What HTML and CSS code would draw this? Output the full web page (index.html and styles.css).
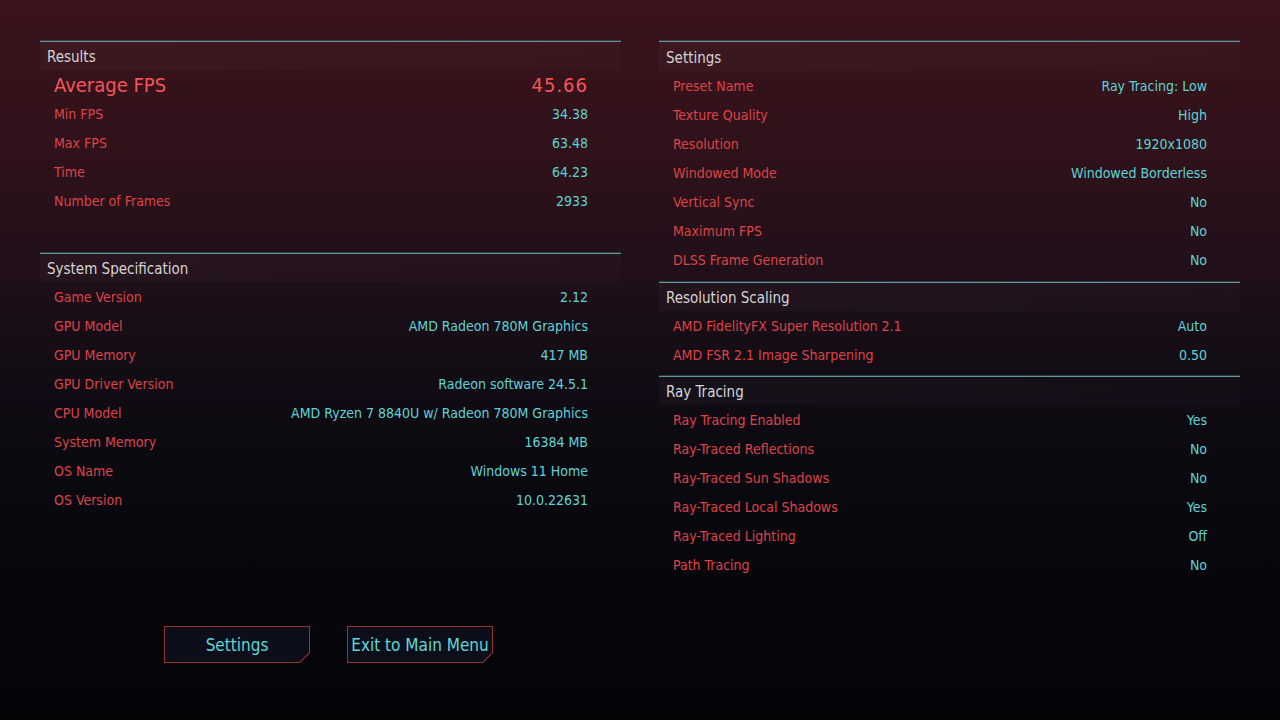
FILE: index.html
```html
<!DOCTYPE html>
<html lang="en">
<head>
<meta charset="utf-8">
<title>Benchmark Results</title>
<link rel="stylesheet" href="styles.css">
</head>
<body>
<main class="screen">
  <div class="column">
    <section class="panel">
      <h2 class="panel-title">Results</h2>
      <div class="row row-main"><span class="label">Average FPS</span><span class="value">45.66</span></div>
      <div class="row"><span class="label">Min FPS</span><span class="value">34.38</span></div>
      <div class="row"><span class="label">Max FPS</span><span class="value">63.48</span></div>
      <div class="row"><span class="label">Time</span><span class="value">64.23</span></div>
      <div class="row"><span class="label">Number of Frames</span><span class="value">2933</span></div>
    </section>
    <section class="panel panel-spaced">
      <h2 class="panel-title">System Specification</h2>
      <div class="row"><span class="label">Game Version</span><span class="value">2.12</span></div>
      <div class="row"><span class="label">GPU Model</span><span class="value">AMD Radeon 780M Graphics</span></div>
      <div class="row"><span class="label">GPU Memory</span><span class="value">417 MB</span></div>
      <div class="row"><span class="label">GPU Driver Version</span><span class="value">Radeon software 24.5.1</span></div>
      <div class="row"><span class="label">CPU Model</span><span class="value">AMD Ryzen 7 8840U w/ Radeon 780M Graphics</span></div>
      <div class="row"><span class="label">System Memory</span><span class="value">16384 MB</span></div>
      <div class="row"><span class="label">OS Name</span><span class="value">Windows 11 Home</span></div>
      <div class="row"><span class="label">OS Version</span><span class="value">10.0.22631</span></div>
    </section>
    <div class="actions">
      <button class="btn"><span class="btn-inner">Settings</span></button>
      <button class="btn"><span class="btn-inner">Exit to Main Menu</span></button>
    </div>
  </div>
  <div class="column">
    <section class="panel panel-first">
      <h2 class="panel-title">Settings</h2>
      <div class="row"><span class="label">Preset Name</span><span class="value">Ray Tracing: Low</span></div>
      <div class="row"><span class="label">Texture Quality</span><span class="value">High</span></div>
      <div class="row"><span class="label">Resolution</span><span class="value">1920x1080</span></div>
      <div class="row"><span class="label">Windowed Mode</span><span class="value">Windowed Borderless</span></div>
      <div class="row"><span class="label">Vertical Sync</span><span class="value">No</span></div>
      <div class="row"><span class="label">Maximum FPS</span><span class="value">No</span></div>
      <div class="row"><span class="label">DLSS Frame Generation</span><span class="value">No</span></div>
    </section>
    <section class="panel panel-tight">
      <h2 class="panel-title">Resolution Scaling</h2>
      <div class="row"><span class="label">AMD FidelityFX Super Resolution 2.1</span><span class="value">Auto</span></div>
      <div class="row"><span class="label">AMD FSR 2.1 Image Sharpening</span><span class="value">0.50</span></div>
    </section>
    <section class="panel panel-tighter">
      <h2 class="panel-title">Ray Tracing</h2>
      <div class="row"><span class="label">Ray Tracing Enabled</span><span class="value">Yes</span></div>
      <div class="row"><span class="label">Ray-Traced Reflections</span><span class="value">No</span></div>
      <div class="row"><span class="label">Ray-Traced Sun Shadows</span><span class="value">No</span></div>
      <div class="row"><span class="label">Ray-Traced Local Shadows</span><span class="value">Yes</span></div>
      <div class="row"><span class="label">Ray-Traced Lighting</span><span class="value">Off</span></div>
      <div class="row"><span class="label">Path Tracing</span><span class="value">No</span></div>
    </section>
  </div>
</main>
</body>
</html>
```
FILE: styles.css
```css
html, body {
  margin: 0;
  padding: 0;
  width: 1280px;
  height: 720px;
  overflow: hidden;
}

body {
  background: linear-gradient(180deg, #3b131b 0%, #30121a 20%, #22101a 36%, #120c15 52%, #0a0910 66%, #07060b 82%, #050407 100%);
  font-family: "DejaVu Sans Condensed", "DejaVu Sans", sans-serif;
  color: #d4d4d4;
}

.screen {
  display: grid;
  grid-template-columns: 581px 581px;
  column-gap: 38px;
  padding: 41px 0 0 40px;
}

.column {
  display: flex;
  flex-direction: column;
}

.panel {
  border-top: 1px solid #5e989a;
  box-shadow: 0 -1px 0 rgba(94, 152, 154, 0.3);
}

.panel-spaced {
  margin-top: 38px;
}

.panel-tight {
  margin-top: 8px;
}

.panel-tighter {
  margin-top: 7px;
}

.panel-title {
  margin: 0;
  height: 28px;
  line-height: 30px;
  padding-left: 7px;
  font-size: 15px;
  font-weight: normal;
  color: #d6d3d4;
  background: linear-gradient(90deg, rgba(255,255,255,0.025), rgba(255,255,255,0.012));
}

.panel-first .panel-title {
  height: 29px;
  line-height: 32px;
}

.row {
  display: flex;
  justify-content: space-between;
  align-items: center;
  height: 29px;
  padding: 0 33px 0 14px;
  font-size: 14px;
}

.label {
  color: #dd4348;
}

.value {
  color: #5fd3d4;
}

.row-main .label {
  font-size: 20px;
  color: #f4545a;
}

.row-main .value {
  font-size: 20px;
  color: #f4545a;
  letter-spacing: 1px;
}

.actions {
  display: flex;
  justify-content: center;
  gap: 37px;
  margin-top: 112px;
  padding-right: 4px;
}

.btn {
  width: 146px;
  height: 37px;
  padding: 1px;
  border: 0;
  background: #93333a;
  clip-path: polygon(0 0, 100% 0, 100% calc(100% - 10px), calc(100% - 10px) 100%, 0 100%);
  cursor: pointer;
  font-family: inherit;
}

.btn-inner {
  display: flex;
  align-items: center;
  justify-content: center;
  width: 100%;
  height: 100%;
  background: #0c0f1a;
  clip-path: polygon(0 0, 100% 0, 100% calc(100% - 9.6px), calc(100% - 9.6px) 100%, 0 100%);
  color: #5fd8d8;
  font-size: 17px;
}
```
